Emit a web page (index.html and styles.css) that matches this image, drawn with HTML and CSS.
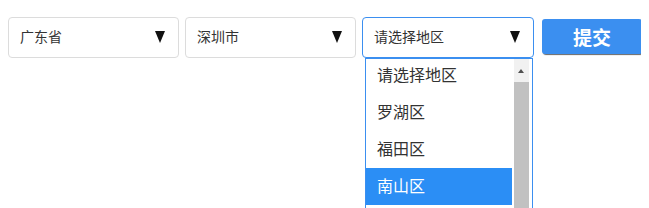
FILE: index.html
```html
<!DOCTYPE html>
<html lang="zh-CN">
<head>
    <meta charset="UTF-8">
    <title>省市区选择</title>
    <link rel="stylesheet" href="styles.css">
</head>
<body>
    <form class="area" action="javascript:void(0)">
        <div class="select">广东省<span class="arrow"></span></div>
        <div class="select">深圳市<span class="arrow"></span></div>
        <div class="field">
            <div class="select open">请选择地区<span class="arrow"></span></div>
            <div class="dropdown">
                <ul class="options">
                    <li>请选择地区</li>
                    <li>罗湖区</li>
                    <li>福田区</li>
                    <li class="hover">南山区</li>
                </ul>
                <div class="scrollbar">
                    <div class="scroll-up"></div>
                    <div class="thumb"></div>
                </div>
            </div>
        </div>
        <button type="submit" class="submit">提交</button>
    </form>
</body>
</html>
```

FILE: styles.css
```css
body{
    margin: 8px;
    font-family: "Liberation Sans", "Noto Sans CJK SC", sans-serif;
    color: #333;
}
.area{
    display: flex;
    align-items: flex-start;
    padding-top: 9px;
}
.select{
    position: relative;
    flex-shrink: 0;
    box-sizing: border-box;
    width: 171px;
    height: 41px;
    margin-right: 6px;
    padding-left: 11px;
    border: 1px solid #dcdcdc;
    border-radius: 4px;
    font-size: 14px;
    line-height: 39px;
}
.field{
    flex-shrink: 0;
    display: flex;
    flex-direction: column;
    margin-right: 8px;
}
.select.open{
    width: 172px;
    border-color: #3b8ff0;
    margin-right: 0;
}
.arrow{
    position: absolute;
    right: 13px;
    top: 13px;
    width: 0;
    height: 0;
    border-left: 5px solid transparent;
    border-right: 5px solid transparent;
    border-top: 12px solid #111;
}
.dropdown{
    margin-left: 3px;
    width: 168px;
    height: 150px;
    box-sizing: border-box;
    border: 1px solid #3b8ff0;
    border-bottom: none;
    background: #fff;
    overflow: hidden;
    display: flex;
}
.options{
    list-style: none;
    margin: -2px 0 0 0;
    padding: 0;
    flex: 1;
    font-size: 16px;
}
.options li{
    height: 37px;
    line-height: 37px;
    padding-left: 11px;
    color: #333;
}
.options li.hover{
    background-color: #2b8ef5;
    color: #fff;
}
.scrollbar{
    width: 15px;
    margin-left: 2px;
    margin-right: 3px;
    background: #f1f1f1;
    display: flex;
    flex-direction: column;
}
.scroll-up{
    height: 23px;
    position: relative;
}
.scroll-up::after{
    content: "";
    position: absolute;
    left: 4px;
    top: 10px;
    border-left: 3px solid transparent;
    border-right: 3px solid transparent;
    border-bottom: 4px solid #505050;
}
.thumb{
    flex: 1;
    background: #c1c1c1;
}
.submit{
    flex-shrink: 0;
    margin-top: 2px;
    width: 100px;
    height: 35px;
    border: none;
    border-radius: 3px;
    background-color: #3b8ff0;
    box-shadow: 1px 1px 1px #666;
    color: #fff;
    font-family: "Liberation Sans", "Noto Sans CJK SC", sans-serif;
    font-size: 19px;
    font-weight: bold;
}
```
